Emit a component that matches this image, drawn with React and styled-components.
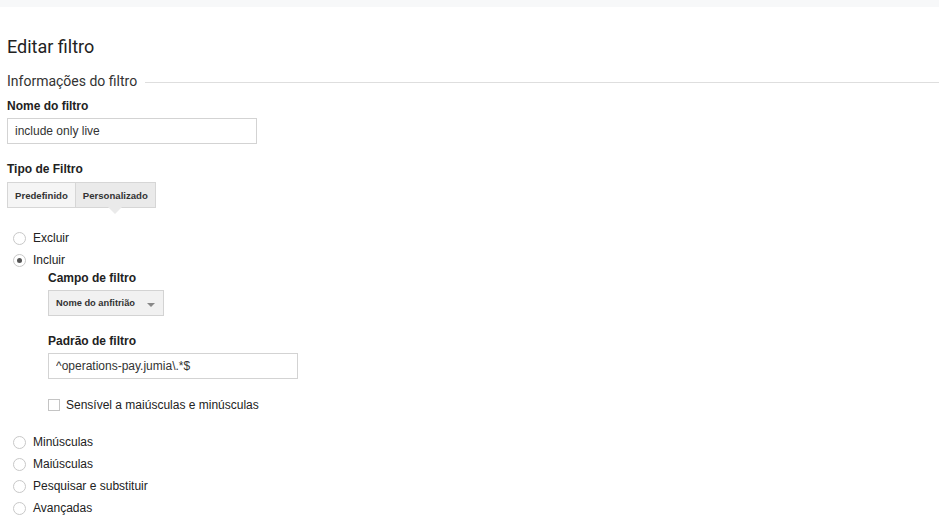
import React, { useState } from "react";
import styled, { createGlobalStyle } from "styled-components";

const GlobalStyle = createGlobalStyle`
  body {
    margin: 0;
    background: #fff;
    font-family: "Liberation Sans", Arial, sans-serif;
    color: #222;
  }
`;

const TopBar = styled.div`
  height: 7px;
  background: #f7f8f9;
`;

const Page = styled.div`
  padding: 0 0 0 7px;
`;

const Title = styled.h1`
  margin: 29px 0 0;
  font-family: Roboto, "Liberation Sans", sans-serif;
  font-weight: 400;
  font-size: 18px;
  line-height: 22px;
  color: #222;
`;

const Section = styled.div`
  display: flex;
  align-items: center;
  gap: 8px;
  margin-top: 14px;
  font-family: Roboto, "Liberation Sans", sans-serif;
  font-size: 14px;
  line-height: 18px;
  color: #333;
  &::after {
    content: "";
    flex: 1;
    height: 1px;
    background: #dedede;
    margin-top: 3px;
  }
`;

const Label = styled.div`
  margin-top: ${p => p.$mt ?? 17}px;
  font-size: 12px;
  font-weight: 700;
  line-height: 16px;
  color: #222;
`;

const TextInput = styled.input`
  display: block;
  box-sizing: border-box;
  margin-top: 4px;
  width: ${p => p.$w}px;
  height: 26px;
  padding: 0 7px;
  border: 1px solid #d3d3d3;
  font-family: "Liberation Sans", Arial, sans-serif;
  font-size: 12px;
  color: #333;
  outline: none;
`;

const Tabs = styled.div`
  display: flex;
  margin-top: 5px;
`;

const Tab = styled.button`
  position: relative;
  height: 26px;
  padding: 0 7px;
  border: 1px solid #d6d6d6;
  margin-left: ${p => (p.$first ? 0 : -1)}px;
  background: ${p => (p.$active ? "#eaeaea" : "#f5f5f5")};
  font-family: "Liberation Sans", Arial, sans-serif;
  font-size: 9.6px;
  font-weight: 700;
  color: #333;
  cursor: pointer;
  &::after {
    content: "";
    display: ${p => (p.$active ? "block" : "none")};
    position: absolute;
    left: 50%;
    bottom: -7px;
    margin-left: -7px;
    border-left: 7px solid transparent;
    border-right: 7px solid transparent;
    border-top: 7px solid #eaeaea;
  }
`;

const RadioList = styled.div`
  margin-top: ${p => p.$mt}px;
  margin-left: 6px;
`;

const RadioRow = styled.label`
  display: flex;
  align-items: center;
  gap: 7px;
  height: 22px;
  font-size: 12px;
  color: #222;
  cursor: pointer;
`;

const Circle = styled.span`
  box-sizing: border-box;
  width: 13px;
  height: 13px;
  border-radius: 50%;
  border: 1px solid #c8c8c8;
  background: #fff;
  display: flex;
  align-items: center;
  justify-content: center;
  &::after {
    content: "";
    display: ${p => (p.$on ? "block" : "none")};
    width: 5px;
    height: 5px;
    border-radius: 50%;
    background: #555;
  }
`;

const Nested = styled.div`
  margin-left: 41px;
`;

const Select = styled.button`
  display: flex;
  align-items: center;
  gap: 12px;
  margin-top: 4px;
  height: 26px;
  padding: 0 8px 0 7px;
  border: 1px solid #d3d3d3;
  background: #f1f1f1;
  font-family: "Liberation Sans", Arial, sans-serif;
  font-size: 9.3px;
  font-weight: 700;
  color: #333;
  &::after {
    content: "";
    margin-top: 3px;
    border-left: 4px solid transparent;
    border-right: 4px solid transparent;
    border-top: 4px solid #888;
  }
`;

const CheckRow = styled.label`
  display: flex;
  align-items: center;
  gap: 6px;
  margin-top: 18px;
  height: 16px;
  font-size: 12px;
  color: #222;
`;

const Box = styled.span`
  box-sizing: border-box;
  width: 12px;
  height: 12px;
  border: 1px solid #c4c4c4;
  background: #fff;
`;

const others = ["Minúsculas", "Maiúsculas", "Pesquisar e substituir", "Avançadas"];

export default function App() {
  const [type, setType] = useState("custom");
  const [mode, setMode] = useState("include");

  return (
    <>
      <GlobalStyle />
      <TopBar />
      <Page>
        <Title>Editar filtro</Title>
        <Section>Informações do filtro</Section>
        <Label $mt={8}>Nome do filtro</Label>
        <TextInput $w={250} defaultValue="include only live" />
        <Label>Tipo de Filtro</Label>
        <Tabs>
          <Tab $first $active={type === "pre"} onClick={() => setType("pre")}>Predefinido</Tab>
          <Tab $active={type === "custom"} onClick={() => setType("custom")}>Personalizado</Tab>
        </Tabs>
        <RadioList $mt={19}>
          <RadioRow onClick={() => setMode("exclude")}>
            <Circle $on={mode === "exclude"} />Excluir
          </RadioRow>
          <RadioRow onClick={() => setMode("include")}>
            <Circle $on={mode === "include"} />Incluir
          </RadioRow>
        </RadioList>
        <Nested>
          <Label $mt={-1}>Campo de filtro</Label>
          <Select>Nome do anfitrião</Select>
          <Label>Padrão de filtro</Label>
          <TextInput $w={250} defaultValue="^operations-pay.jumia\.*$" />
          <CheckRow>
            <Box />Sensível a maiúsculas e minúsculas
          </CheckRow>
        </Nested>
        <RadioList $mt={18}>
          {others.map(o => (
            <RadioRow key={o} onClick={() => setMode(o)}>
              <Circle $on={mode === o} />{o}
            </RadioRow>
          ))}
        </RadioList>
      </Page>
    </>
  );
}
